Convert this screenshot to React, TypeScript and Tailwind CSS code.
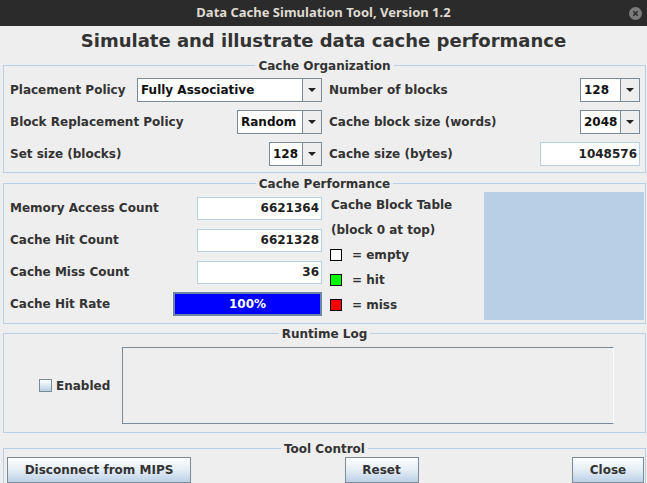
import React from 'react';

const labelText = "text-[12px] font-bold text-[#333333] leading-none whitespace-nowrap";

interface SectionProps {
  title: string;
  className: string;
  children: React.ReactNode;
}

// titled border panel, the title sits on the top line
const Section: React.FC<SectionProps> = ({ title, className, children }) => (
  <div className={`ml-[3px] mr-[1px] border border-[#b8cfe5] ${className}`}>
    <div className="-mt-[8px] flex h-[15px] justify-center">
      <span className="flex h-[15px] items-center whitespace-nowrap bg-[#eeeeee] px-[3px] text-[12px] font-bold text-[#333333]">
        {title}
      </span>
    </div>
    {children}
  </div>
);

const Arrow = () => (
  <svg width="8" height="4" viewBox="0 0 8 4">
    <polygon points="0,0 8,0 4,4" fill="#222222" />
  </svg>
);

const Combo: React.FC<{ value: string; width: string }> = ({ value, width }) => (
  <div className={`flex h-[24px] border border-[#7a8a99] bg-white ${width}`}>
    <div className="flex flex-1 items-center pl-[3px] text-[12px] font-bold leading-none text-[#111111]">
      {value}
    </div>
    <div className="flex w-[19px] items-center justify-center border-l border-[#7a8a99] bg-[#eeeeee]">
      <Arrow />
    </div>
  </div>
);

const Field: React.FC<{ value: string; width: string; height: string }> = ({ value, width, height }) => (
  <div
    className={`flex items-center justify-end border border-[#b8cfe5] bg-white pr-[2px] text-[12px] font-bold leading-none text-[#222222] ${width} ${height}`}
  >
    {value}
  </div>
);

const Row: React.FC<{ label: string; pad: string; children: React.ReactNode }> = ({ label, pad, children }) => (
  <div className={`flex h-[24px] items-center justify-between ${pad}`}>
    <span className={labelText}>{label}</span>
    {children}
  </div>
);

const Swatch: React.FC<{ color: string; label: string }> = ({ color, label }) => (
  <div className="flex h-[25px] items-center">
    <span className={`h-[12px] w-[12px] border border-black ${color}`} />
    <span className={`ml-[10px] ${labelText}`}>{label}</span>
  </div>
);

const Button: React.FC<{ label: string; width: string }> = ({ label, width }) => (
  <button
    type="button"
    className={`flex h-[26px] items-center justify-center border border-[#7a8a99] bg-gradient-to-b from-[#fdfeff] via-[#e4edf6] to-[#bcd0e6] ${width} ${labelText}`}
  >
    {label}
  </button>
);

export default function App() {
  return (
    <div className="flex h-[483px] w-[647px] flex-col overflow-hidden bg-[#eeeeee] font-['DejaVu_Sans',sans-serif]">
      {/* window title bar */}
      <div className="flex h-[26px] shrink-0 items-center bg-[#2b2b2b]">
        <div className="w-[24px]" />
        <div className="flex-1 text-center font-['Noto_Sans',sans-serif] text-[13px] font-bold text-[#dfdbd2]">
          Data Cache Simulation Tool, Version 1.2
        </div>
        <div className="flex w-[24px] items-center justify-center">
          <svg width="13" height="13" viewBox="0 0 13 13">
            <circle cx="6.5" cy="6.5" r="6.5" fill="#7b7b7b" />
            <path d="M4.3 4.3 L8.7 8.7 M8.7 4.3 L4.3 8.7" stroke="#2b2b2b" strokeWidth="1.6" />
          </svg>
        </div>
      </div>

      <h1 className="pt-[4px] text-center text-[18px] font-bold leading-[22px] text-[#333333]">
        Simulate and illustrate data cache performance
      </h1>

      <Section title="Cache Organization" className="mt-[13px]">
        <div className="grid grid-cols-[318px_1fr] gap-y-[8px] pb-[6px] pt-[5px]">
          <Row label="Placement Policy" pad="pl-[6px]">
            <Combo value="Fully Associative" width="w-[185px]" />
          </Row>
          <Row label="Number of blocks" pad="pl-[7px] pr-[5px]">
            <Combo value="128" width="w-[60px]" />
          </Row>
          <Row label="Block Replacement Policy" pad="pl-[6px]">
            <Combo value="Random" width="w-[85px]" />
          </Row>
          <Row label="Cache block size (words)" pad="pl-[7px] pr-[5px]">
            <Combo value="2048" width="w-[60px]" />
          </Row>
          <Row label="Set size (blocks)" pad="pl-[6px]">
            <Combo value="128" width="w-[53px]" />
          </Row>
          <Row label="Cache size (bytes)" pad="pl-[7px] pr-[5px]">
            <Field value="1048576" width="w-[100px]" height="h-[24px]" />
          </Row>
        </div>
      </Section>

      <Section title="Cache Performance" className="mt-[10px]">
        <div className="flex">
          <div className="flex w-[318px] flex-col gap-[8px] pb-[7px] pt-[5px]">
            <Row label="Memory Access Count" pad="pl-[6px]">
              <Field value="6621364" width="w-[125px]" height="h-[23px]" />
            </Row>
            <Row label="Cache Hit Count" pad="pl-[6px]">
              <Field value="6621328" width="w-[125px]" height="h-[23px]" />
            </Row>
            <Row label="Cache Miss Count" pad="pl-[6px]">
              <Field value="36" width="w-[125px]" height="h-[23px]" />
            </Row>
            <Row label="Cache Hit Rate" pad="pl-[6px]">
              <div className="flex h-[24px] w-[149px] items-center justify-center border-2 border-[#6f86a3] bg-[#0000ff] text-[12px] font-bold leading-none text-white">
                100%
              </div>
            </Row>
          </div>
          <div className="flex flex-1">
            <div className="flex w-[162px] flex-col pl-[8px] pt-[1px]">
              <div className="flex h-[25px] items-center pl-[1px]">
                <span className={labelText}>Cache Block Table</span>
              </div>
              <div className="flex h-[25px] items-center pl-[1px]">
                <span className={labelText}>(block 0 at top)</span>
              </div>
              <Swatch color="bg-white" label="= empty" />
              <Swatch color="bg-[#00ff00]" label="= hit" />
              <Swatch color="bg-[#ff0000]" label="= miss" />
            </div>
            <div className="mb-[3px] mr-[1px] mt-[1px] flex-1 bg-[#b8cfe5]" />
          </div>
        </div>
      </Section>

      <Section title="Runtime Log" className="mt-[9px]">
        <div className="flex items-center pb-[8px] pt-[6px]">
          <div className="flex w-[118px] items-center pl-[35px]">
            <span className="h-[13px] w-[13px] border border-[#7a8a99] bg-gradient-to-b from-white to-[#b8cfe5]" />
            <span className={`ml-[4px] ${labelText}`}>Enabled</span>
          </div>
          <div className="h-[77px] w-[492px] border border-[#7a8a99] border-r-white bg-[#eeeeee]" />
        </div>
      </Section>

      <Section title="Tool Control" className="mt-[15px]">
        <div className="mt-[1px] flex justify-between pl-[3px] pr-[1px]">
          <Button label="Disconnect from MIPS" width="w-[184px]" />
          <Button label="Reset" width="w-[74px]" />
          <Button label="Close" width="w-[72px]" />
        </div>
      </Section>
    </div>
  );
}
